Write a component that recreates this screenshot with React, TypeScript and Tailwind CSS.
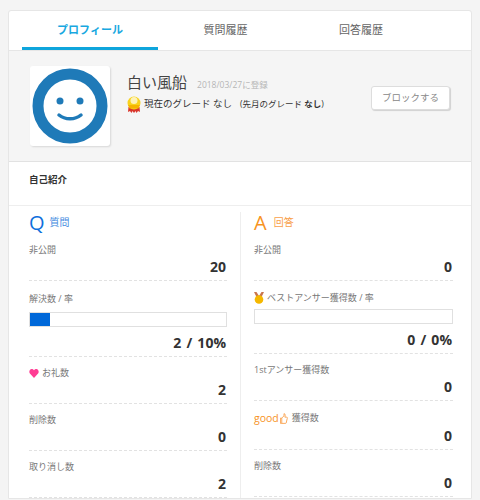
import React from "react";

const font = { fontFamily: '"Open Sans", "Noto Sans CJK JP", sans-serif' };

const Medal = () => (
  <svg width="14" height="17" viewBox="0 0 14 17" className="shrink-0">
    <path d="M1.500 11L1 16l2-1 1.500 2 1-2 1.500 2 1.500-2 1 2L11 15l2 1-.5-5z" fill="#d9362c" />
    <circle cx="7" cy="7" r="6.500" fill="#f8d21c" />
    <circle cx="7" cy="4.500" r="3.500" fill="#fdf2b8" />
    <path d="M1 9h12l-1.500 3.500h-9z" fill="#f5b400" />
  </svg>
);

const SmallMedal = () => (
  <svg width="10" height="12" viewBox="0 0 10 12" className="shrink-0">
    <path d="M0 0l2.500 0L5 4 7.500 0 10 0 7 6H3z" fill="#c9764f" />
    <circle cx="5" cy="7.500" r="4.300" fill="#f5b800" />
  </svg>
);

const Heart = () => (
  <svg width="10" height="9" viewBox="0 0 24 22" className="shrink-0">
    <path d="M12 22L2 11C-2 5 3-1 8 0c2 .4 3 2 4 3 1-1 2-2.600 4-3 5-1 10 5 6 11z" fill="#ff3d94" />
  </svg>
);

const Thumb = () => (
  <svg width="8" height="11" viewBox="0 0 9 12" fill="none" stroke="#f9a04a" strokeWidth="1" className="shrink-0">
    <path d="M.5 5.500h1.500v6H.5zM2 5.500L4.500 3V.5c1.500 0 1.500 2 1 4h2c1 0 1 1 .5 2l-1 4.500c0 .4-.5.500-1 .500H2" />
  </svg>
);

const Stat = ({
  label,
  value,
  icon,
  bar,
  barClass = "",
  rowClass = "h-[39px]",
}: {
  label: React.ReactNode;
  value: string;
  icon?: React.ReactNode;
  bar?: number;
  barClass?: string;
  rowClass?: string;
}) => (
  <div className={`flex flex-col border-b border-dashed border-[#e2e2e2] pt-[1px] ${rowClass}`}>
    <div className="flex items-center gap-[3px] text-[9px] leading-[14px] text-[#777777]">
      {icon}
      <span>{label}</span>
    </div>
    {bar !== undefined && (
      <div className={`h-[15px] w-full border border-[#e0e0e0] bg-white ${barClass}`}>
        <div className="h-full bg-[#0068d9]" style={{ width: `${bar}%` }} />
      </div>
    )}
    <div className="mt-auto pb-[3px] pr-[1px] text-right text-[14px] font-bold leading-[20px] text-[#333333] [word-spacing:1.5px]">
      {value}
    </div>
  </div>
);

export default function App() {
  return (
    <div className="h-[500px] w-[480px] overflow-hidden bg-[#f4f4f4] pt-[10px]" style={font}>
      <div className="mx-[8px] rounded-t-[3px] border border-[#e6e6e6] bg-white">
        {/* tabs */}
        <div className="flex h-[40px] border-b border-[#e6e6e6] pl-[13px]">
          <div className="flex h-[39px] w-[136px] items-center justify-center border-b-[3px] border-[#0ea5dc] pt-[2px] text-[11px] font-bold text-[#18a8e0]">
            プロフィール
          </div>
          <div className="flex h-[39px] w-[135px] items-center justify-center text-[11px] text-[#666666]">質問履歴</div>
          <div className="flex h-[39px] w-[136px] items-center justify-center text-[11px] text-[#666666]">回答履歴</div>
        </div>

        {/* profile */}
        <div className="flex h-[111px] border-b border-[#e2e2e2] bg-[#f5f5f5] pl-[21px] pt-[15px]">
          <div className="flex h-[80px] w-[80px] items-center justify-center rounded-[3px] bg-white shadow-[1px_1px_2px_rgba(0,0,0,0.12)]">
            <svg width="76" height="76" viewBox="0 0 76 76">
              <circle cx="38" cy="38" r="32" fill="none" stroke="#1f7ab8" strokeWidth="11" />
              <circle cx="28" cy="33" r="3.500" fill="#1f7ab8" />
              <circle cx="48" cy="33" r="3.500" fill="#1f7ab8" />
              <path d="M27 47c6 5 16 5 22 0" fill="none" stroke="#1f7ab8" strokeWidth="3.500" strokeLinecap="round" />
            </svg>
          </div>
          <div className="ml-[17px] w-[230px] pt-[5px]">
            <div className="flex items-baseline">
              <span className="text-[15px] leading-[22px] text-[#444444]">白い風船</span>
              <span className="ml-[10px] text-[8.500px] text-[#b5b5b5]">2018/03/27に登録</span>
            </div>
            <div className="mt-[3px] flex items-center text-[9.500px] text-[#333333]">
              <Medal />
              <span className="ml-[3px]">現在のグレード なし</span>
              <span className="ml-[8px] text-[8.500px]">
                (先月のグレード <b>なし</b>)
              </span>
            </div>
          </div>
          <div className="ml-[14px] mt-[20px] flex h-[24px] w-[79px] items-center justify-center rounded-[3px] border border-[#dddddd] bg-white text-[9.500px] text-[#888888] shadow-[1px_1px_1px_rgba(0,0,0,0.15)]">
            ブロックする
          </div>
        </div>

        {/* self introduction */}
        <div className="h-[44px] border-b border-[#eeeeee] pl-[20px] pt-[11px] text-[9.500px] font-bold leading-[14px] text-[#333333]">
          自己紹介
        </div>

        {/* stats */}
        <div className="flex pt-[6px]">
          <div className="w-[232px] border-r border-[#eeeeee] pl-[20px] pr-[13px]">
            <div className="flex h-[23px] items-center gap-[5px] pb-[2px] text-[#0f6fdc]">
              <span className="text-[20px] leading-none">Q</span>
              <span className="text-[10px] text-[#3f8ae0]">質問</span>
            </div>
            <div className="pt-[7px]">
              <Stat label="非公開" value="20" />
              <div className="pt-[10px]">
                <Stat label="解決数 / 率" value="2 / 10%" bar={10} barClass="mt-[6px]" rowClass="h-[66px]" />
              </div>
              <div className="pt-[8px]">
                <Stat label="お礼数" value="2" icon={<Heart />} />
              </div>
              <div className="pt-[8px]">
                <Stat label="削除数" value="0" />
              </div>
              <div className="pt-[8px]">
                <Stat label="取り消し数" value="2" />
              </div>
            </div>
          </div>
          <div className="w-[230px] pl-[13px] pr-[18px]">
            <div className="flex h-[23px] items-center gap-[7px] pb-[2px] text-[#f7931e]">
              <span className="text-[20px] leading-none">A</span>
              <span className="text-[10px] text-[#f9a04a]">回答</span>
            </div>
            <div className="pt-[7px]">
              <Stat label="非公開" value="0" />
              <div className="pt-[9px]">
                <Stat label="ベストアンサー獲得数 / 率" value="0 / 0%" icon={<SmallMedal />} bar={0} barClass="mt-[4px]" rowClass="h-[64px]" />
              </div>
              <div className="pt-[8px]">
                <Stat label="1stアンサー獲得数" value="0" />
              </div>
              <div className="pt-[9px]">
                <Stat
                  label={
                    <span className="flex items-center gap-[1px]">
                      <span className="text-[10.500px] text-[#f7931e]">good</span>
                      <Thumb />
                      <span className="ml-[3px]">獲得数</span>
                    </span>
                  }
                  value="0"
                  rowClass="h-[40px]"
                />
              </div>
              <div className="pt-[8px]">
                <Stat label="削除数" value="0" />
              </div>
            </div>
          </div>
        </div>
      </div>
    </div>
  );
}
